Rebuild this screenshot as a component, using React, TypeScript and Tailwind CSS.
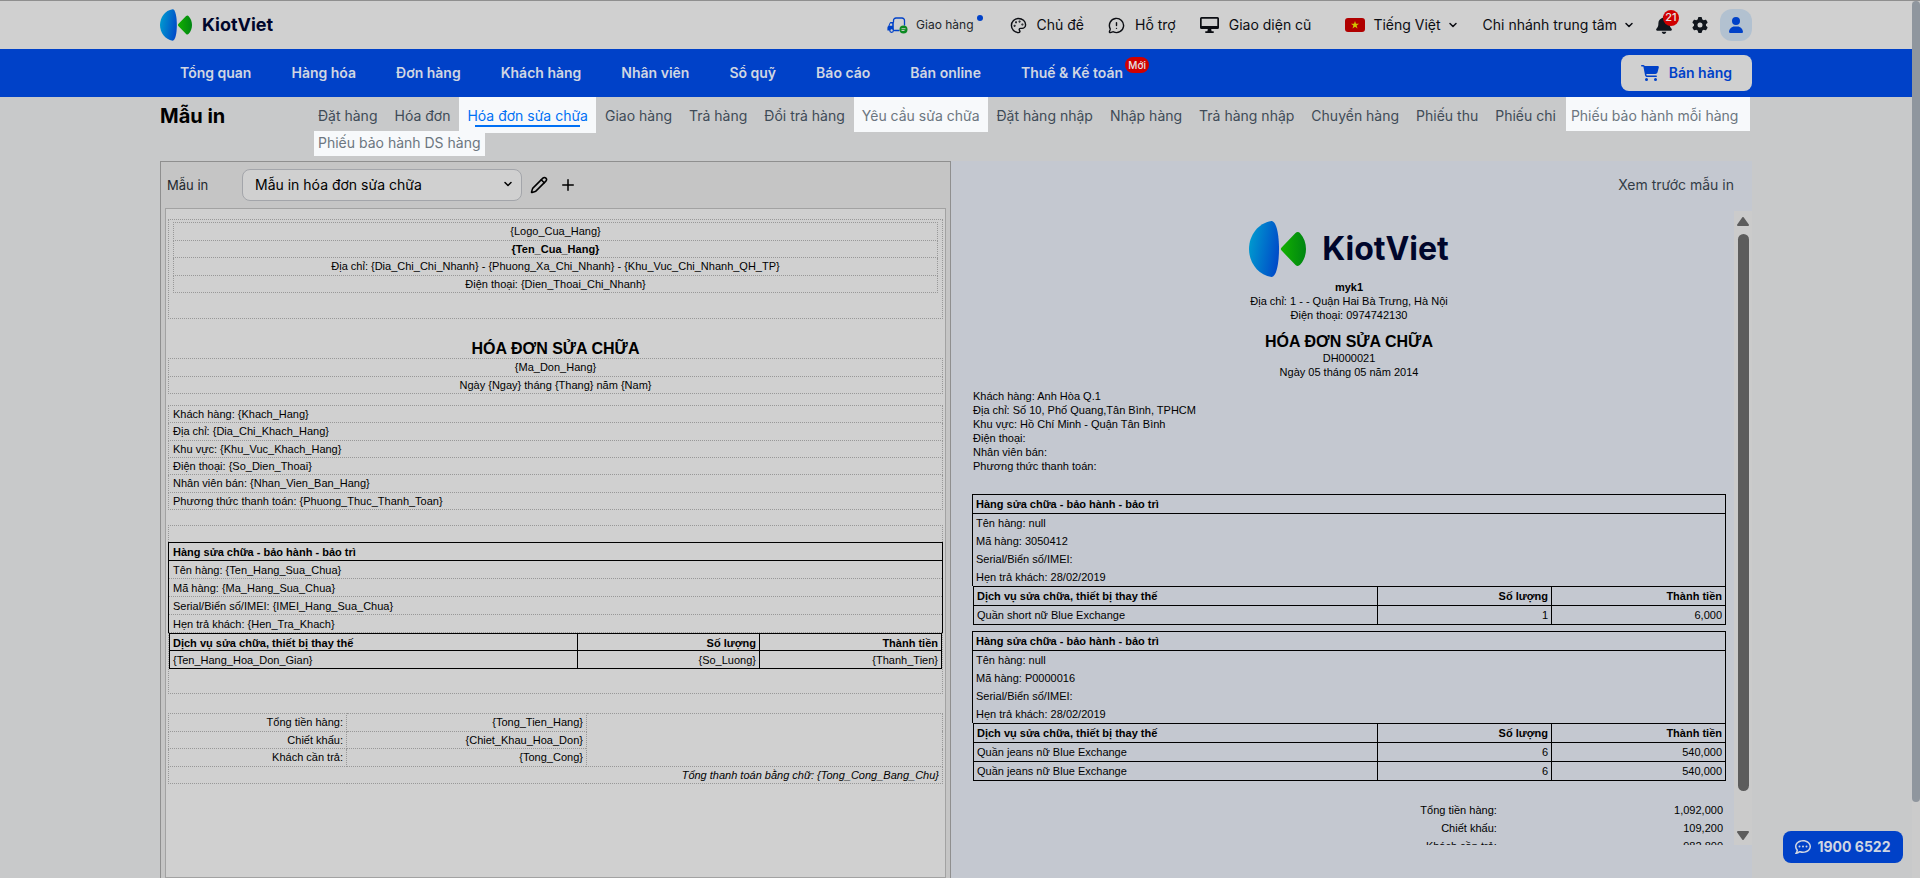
import type { ReactNode } from "react";
import { ChevronDown, MessageCircleWarning, Palette, Pencil, Plus } from "lucide-react";
import { FaBell, FaCartShopping, FaGear, FaRegCommentDots, FaUser } from "react-icons/fa6";

const mainMenu = ["Tổng quan", "Hàng hóa", "Đơn hàng", "Khách hàng", "Nhân viên", "Sổ quỹ", "Báo cáo", "Bán online"];

type Tab = { name: string; look?: "active" | "spot" | "spotWide" | "spotLast" };

const tabs: Tab[] = [
  { name: "Đặt hàng" },
  { name: "Hóa đơn" },
  { name: "Hóa đơn sửa chữa", look: "active" },
  { name: "Giao hàng" },
  { name: "Trả hàng" },
  { name: "Đổi trả hàng" },
  { name: "Yêu cầu sửa chữa", look: "spot" },
  { name: "Đặt hàng nhập" },
  { name: "Nhập hàng" },
  { name: "Trả hàng nhập" },
  { name: "Chuyển hàng" },
  { name: "Phiếu thu" },
  { name: "Phiếu chi" },
  { name: "Phiếu bảo hành mỗi hàng", look: "spotWide" },
  { name: "Phiếu bảo hành DS hàng", look: "spotLast" },
];

const tabLooks = {
  plain: "h-[34px] pt-[9px] px-2 text-[#3f4b57]",
  active: "h-[36px] pt-[9px] px-2 bg-[#f7f9fb] text-[#0070f4]",
  spot: "h-[35px] pt-[9px] px-2 bg-[#f7f9fb] text-[#6c7680]",
  spotWide: "h-[34px] pt-[9px] pl-[5px] pr-3 ml-px bg-[#f7f9fb] text-[#6c7680]",
  spotLast: "h-[25px] pt-[2px] px-1 bg-[#f7f9fb] text-[#6c7680] ml-1 -mt-[2px]",
};

const customerFields = [
  "Khách hàng: {Khach_Hang}",
  "Địa chỉ: {Dia_Chi_Khach_Hang}",
  "Khu vực: {Khu_Vuc_Khach_Hang}",
  "Điện thoại: {So_Dien_Thoai}",
  "Nhân viên bán: {Nhan_Vien_Ban_Hang}",
  "Phương thức thanh toán: {Phuong_Thuc_Thanh_Toan}",
];

const repairFields = [
  "Tên hàng: {Ten_Hang_Sua_Chua}",
  "Mã hàng: {Ma_Hang_Sua_Chua}",
  "Serial/Biển số/IMEI: {IMEI_Hang_Sua_Chua}",
  "Hẹn trả khách: {Hen_Tra_Khach}",
];

const customer = [
  "Khách hàng: Anh Hòa Q.1",
  "Địa chỉ: Số 10, Phố Quang,Tân Bình, TPHCM",
  "Khu vực: Hồ Chí Minh - Quận Tân Bình",
  "Điện thoại:",
  "Nhân viên bán:",
  "Phương thức thanh toán:",
];

const repairs = [
  { code: "3050412", lines: [["Quần short nữ Blue Exchange", "1", "6,000"]] },
  {
    code: "P0000016",
    lines: [
      ["Quần jeans nữ Blue Exchange", "6", "540,000"],
      ["Quần jeans nữ Blue Exchange", "6", "540,000"],
    ],
  },
];

const totals = [
  ["Tổng tiền hàng:", "1,092,000"],
  ["Chiết khấu:", "109,200"],
  ["Khách cần trả:", "982,800"],
];

function LogoMark({ id, className }: { id: string; className: string }) {
  return (
    <svg viewBox="0 0 57 56" className={className} aria-hidden="true">
      <defs>
        <linearGradient id={`${id}-blue`} x1="0" y1="0.4" x2="1" y2="0.7">
          <stop offset="0" stopColor="#0099cf" />
          <stop offset="1" stopColor="#0048c8" />
        </linearGradient>
        <linearGradient id={`${id}-green`} x1="0" y1="0" x2="1" y2="0">
          <stop offset="0" stopColor="#12b000" />
          <stop offset="1" stopColor="#008512" />
        </linearGradient>
      </defs>
      <path d="M22.500 0C9 2 0 14.500 0 28s9 26 22.500 28C27.500 56 30 42 30 28S27.500 0 22.500 0Z" fill={`url(#${id}-blue)`} />
      <path d="M32.600 29.600a2.300 2.300 0 0 1 0-3.200L46.500 12c1.300-1.300 3.400-1.300 4.600.2C55 16.500 57 22 57 28s-2 11.500-5.900 15.800c-1.200 1.500-3.300 1.500-4.600.2Z" fill={`url(#${id}-green)`} />
    </svg>
  );
}

function TruckIcon() {
  return (
    <svg viewBox="0 0 21 17" className="h-[17px] w-[21px]" fill="none" aria-hidden="true">
      <path d="M6.500 5V3.500A2.500 2.500 0 0 1 9 1h6a2.500 2.500 0 0 1 2.500 2.500V8M7.500 13.500H12" stroke="#0041c8" strokeWidth="1.300" strokeLinecap="round" />
      <path fillRule="evenodd" d="M6.800 5H4.200c-.8 0-1.400.5-1.700 1.200L1.300 9C.7 9.400.4 10 .4 10.700V13.500h6.400ZM3.300 6.500h1.900v2.200H2.500Z" fill="#0041c8" />
      <circle cx="4.600" cy="13.500" r="1.800" fill="#d0d0d0" stroke="#0041c8" strokeWidth="1.200" />
      <circle cx="16.500" cy="12.500" r="4" fill="#0b8a22" />
      <path d="M14.500 11.700h4M14.500 13.500h3" stroke="#d0d0d0" strokeWidth="0.900" />
    </svg>
  );
}

function DesktopIcon() {
  return (
    <svg viewBox="0 0 19 16" className="h-4 w-[19px]" fill="currentColor" aria-hidden="true">
      <path fillRule="evenodd" d="M1.500 0h16A1.500 1.500 0 0 1 19 1.500v9a1.500 1.500 0 0 1-1.500 1.500h-16A1.500 1.500 0 0 1 0 10.500v-9A1.500 1.500 0 0 1 1.500 0Zm.2 1.700V9h15.600V1.700Z" />
      <path d="M7.800 12h3.400l.4 2.300h2.100V16H5.300v-1.700h2.100Z" />
    </svg>
  );
}

function Flag() {
  return (
    <svg viewBox="0 0 20 14" className="h-[14px] w-5" aria-hidden="true">
      <rect width="20" height="14" rx="3" fill="#b00000" />
      <path d="m10 3 1 2.800h3l-2.400 1.700.9 2.900L10 8.700l-2.500 1.700.9-2.900L6 5.800h3Z" fill="#d0c400" />
    </svg>
  );
}

function HeaderLink({ icon, children, className = "" }: { icon: ReactNode; children: ReactNode; className?: string }) {
  return (
    <button type="button" className={`flex items-center ${className}`}>
      {icon}
      {children}
    </button>
  );
}

function TopBar() {
  return (
    <header className="flex h-[49px] items-center justify-between border-t border-[#8f8f8f] bg-[#d0d0d0] px-40 text-sm text-[#0b0d12]">
      <a href="#" className="flex items-center gap-[10px]">
        <LogoMark id="top" className="h-8 w-8" />
        <span className="text-lg font-bold text-[#00062b]">KiotViet</span>
      </a>
      <div className="flex items-center">
        <button type="button" className="relative mr-9 flex items-center gap-2 text-xs text-[#22262c]">
          <TruckIcon />
          Giao hàng
          <span className="absolute -top-[2px] -right-[9px] size-[6px] rounded-full bg-[#0041c8]" />
        </button>
        <HeaderLink className="mr-6 gap-[10px]" icon={<Palette size={17} strokeWidth={2} />}>Chủ đề</HeaderLink>
        <HeaderLink className="mr-6 gap-[10px]" icon={<MessageCircleWarning size={17} strokeWidth={2} />}>Hỗ trợ</HeaderLink>
        <HeaderLink className="mr-[34px] gap-[10px]" icon={<DesktopIcon />}>Giao diện cũ</HeaderLink>
        <HeaderLink className="mr-6 gap-2" icon={<Flag />}>
          <span className="flex items-center gap-[6px]">
            Tiếng Việt
            <ChevronDown size={12} strokeWidth={3} />
          </span>
        </HeaderLink>
        <button type="button" className="mr-5 flex items-center gap-[6px]">
          Chi nhánh trung tâm
          <ChevronDown size={12} strokeWidth={3} />
        </button>
        <button type="button" className="relative mr-[19px]" aria-label="Thông báo">
          <FaBell size={18} className="text-[#11161d]" />
          <span className="absolute -top-[6px] -right-[6px] flex size-4 items-center justify-center rounded-full bg-[#d00000] text-[11px] font-medium text-[#e6e6e6]">21</span>
        </button>
        <button type="button" className="mr-3" aria-label="Thiết lập">
          <FaGear size={16} className="text-[#11161d]" />
        </button>
        <button type="button" className="flex size-8 items-center justify-center rounded-xl bg-[#b2c1d0]" aria-label="Tài khoản">
          <FaUser size={16} className="text-[#0041c8]" />
        </button>
      </div>
    </header>
  );
}

function MainNav() {
  return (
    <nav className="flex h-12 items-center justify-between bg-[#0041c8] px-40 text-sm font-semibold text-[#d0d6e2]">
      <div className="flex items-center">
        {mainMenu.map((item) => (
          <a key={item} href="#" className="px-5">{item}</a>
        ))}
        <a href="#" className="relative px-5">
          Thuế &amp; Kế toán
          <span className="absolute -top-[6px] -right-[6px] flex h-4 w-6 items-center justify-center rounded-full bg-[#d00000] text-[10px] font-medium text-[#e6e6e6]">Mới</span>
        </a>
      </div>
      <button type="button" className="flex h-9 items-center gap-[10px] rounded-lg bg-[#d0d0d0] px-5 text-[#0041c8]">
        <FaCartShopping size={18} />
        Bán hàng
      </button>
    </nav>
  );
}

function TemplateTabs() {
  return (
    <div className="flex h-16 px-40">
      <h1 className="w-[150px] shrink-0 pt-[5px] text-xl leading-7 font-bold text-black">Mẫu in</h1>
      <div className="flex flex-1 flex-wrap content-start items-start gap-x-px text-sm">
        {tabs.map((tab) => (
          <a key={tab.name} href="#" className={`flex items-start ${tabLooks[tab.look ?? "plain"]}`}>
            {tab.look === "active" ? (
              <span className="relative">
                {tab.name}
                <span className="absolute inset-x-2 -bottom-[1px] h-[2px] bg-[#0070f4]" />
              </span>
            ) : (
              tab.name
            )}
          </a>
        ))}
      </div>
    </div>
  );
}

const dotted = "border border-dotted border-[#989898]";

function TemplateEditor() {
  return (
    <div className="mx-1 flex-1 overflow-hidden border border-[#a2a2a2] bg-[#d0d0d0] px-[2px] pt-[10px] font-['Liberation_Sans',Arial,sans-serif] text-[11px] leading-[14px] text-black">
      <div className={`h-[100px] px-1 pt-[2px] ${dotted}`}>
        <table className="h-[71px] w-full border-collapse text-center">
          <tbody>
            <tr><td className={dotted}>{"{Logo_Cua_Hang}"}</td></tr>
            <tr><td className={`font-bold ${dotted}`}>{"{Ten_Cua_Hang}"}</td></tr>
            <tr><td className={dotted}>{"Địa chỉ: {Dia_Chi_Chi_Nhanh} - {Phuong_Xa_Chi_Nhanh} - {Khu_Vuc_Chi_Nhanh_QH_TP}"}</td></tr>
            <tr><td className={dotted}>{"Điện thoại: {Dien_Thoai_Chi_Nhanh}"}</td></tr>
          </tbody>
        </table>
      </div>

      <h2 className="mt-5 text-center text-base leading-[19px] font-bold">HÓA ĐƠN SỬA CHỮA</h2>
      <table className="h-[36px] w-full border-collapse text-center">
        <tbody>
          <tr><td className={dotted}>{"{Ma_Don_Hang}"}</td></tr>
          <tr><td className={dotted}>{"Ngày {Ngay} tháng {Thang} năm {Nam}"}</td></tr>
        </tbody>
      </table>

      <table className="mt-[11px] h-[105px] w-full border-collapse">
        <tbody>
          {customerFields.map((field) => (
            <tr key={field}><td className={`px-1 ${dotted}`}>{field}</td></tr>
          ))}
        </tbody>
      </table>

      <table className="mt-[15px] w-full border-collapse">
        <tbody>
          <tr className="h-[17px]"><td className={dotted} /></tr>
          <tr className="h-[18px]"><th className="border border-black px-1 text-left">Hàng sửa chữa - bảo hành - bảo trì</th></tr>
          {repairFields.map((field) => (
            <tr key={field} className="h-[18px]">
              <td className="border border-y-[#989898] border-x-black [border-block-style:dotted] px-1">{field}</td>
            </tr>
          ))}
          <tr>
            <td className={`pb-6 ${dotted}`}>
              <table className="h-[36px] w-full table-fixed border-collapse">
                <thead>
                  <tr>
                    <th className="border border-black px-[3px] pt-[2px] text-left">Dịch vụ sửa chữa, thiết bị thay thế</th>
                    <th className="w-[182px] border border-black px-[3px] pt-[2px] text-right">Số lượng</th>
                    <th className="w-[182px] border border-black px-[3px] pt-[2px] text-right">Thành tiền</th>
                  </tr>
                </thead>
                <tbody>
                  <tr>
                    <td className="border border-black px-[3px]">{"{Ten_Hang_Hoa_Don_Gian}"}</td>
                    <td className="border border-black px-[3px] text-right">{"{So_Luong}"}</td>
                    <td className="border border-black px-[3px] text-right">{"{Thanh_Tien}"}</td>
                  </tr>
                </tbody>
              </table>
            </td>
          </tr>
        </tbody>
      </table>

      <table className="mt-[19px] h-[71px] w-full border-collapse text-right">
        <tbody>
          <tr>
            <td className={`w-[23%] px-[3px] ${dotted}`}>Tổng tiền hàng:</td>
            <td className={`w-[31%] px-[3px] ${dotted}`}>{"{Tong_Tien_Hang}"}</td>
            <td rowSpan={3} className={dotted} />
          </tr>
          <tr>
            <td className={`px-[3px] ${dotted}`}>Chiết khấu:</td>
            <td className={`px-[3px] ${dotted}`}>{"{Chiet_Khau_Hoa_Don}"}</td>
          </tr>
          <tr>
            <td className={`px-[3px] ${dotted}`}>Khách cần trả:</td>
            <td className={`px-[3px] ${dotted}`}>{"{Tong_Cong}"}</td>
          </tr>
          <tr><td colSpan={3} className={`px-[3px] italic ${dotted}`}>{"Tổng thanh toán bằng chữ: {Tong_Cong_Bang_Chu}"}</td></tr>
        </tbody>
      </table>
    </div>
  );
}

function RepairBlock({ code, lines }: { code: string; lines: string[][] }) {
  const fields = ["Tên hàng: null", `Mã hàng: ${code}`, "Serial/Biển số/IMEI:", "Hẹn trả khách: 28/02/2019"];
  return (
    <div className="mb-[6px]">
      <div className="border border-b-0 border-black">
        <div className="h-[19px] border-b border-black px-[3px] leading-[18px] font-bold">Hàng sửa chữa - bảo hành - bảo trì</div>
        {fields.map((field) => (
          <div key={field} className="h-[18px] px-[3px] leading-[18px]">{field}</div>
        ))}
      </div>
      <div className="pl-px">
        <table className="w-full table-fixed border-collapse">
          <thead>
            <tr className="h-[19px]">
              <th className="border border-black px-[3px] text-left">Dịch vụ sửa chữa, thiết bị thay thế</th>
              <th className="w-[174px] border border-black px-[3px] text-right">Số lượng</th>
              <th className="w-[174px] border border-black px-[3px] text-right">Thành tiền</th>
            </tr>
          </thead>
          <tbody>
            {lines.map(([name, quantity, amount], i) => (
              <tr key={i} className="h-[19px]">
                <td className="border border-black px-[3px]">{name}</td>
                <td className="border border-black px-[3px] text-right">{quantity}</td>
                <td className="border border-black px-[3px] text-right">{amount}</td>
              </tr>
            ))}
          </tbody>
        </table>
      </div>
    </div>
  );
}

function Preview() {
  return (
    <div className="flex min-w-0 flex-1 flex-col overflow-hidden pt-[10px] pl-[21px] font-['Liberation_Sans',Arial,sans-serif] text-[11px] leading-[14px] text-black">
      <div className="flex flex-col items-center">
        <div className="flex h-14 items-center gap-4">
          <LogoMark id="preview" className="h-14 w-[57px]" />
          <span className="font-['Inter',sans-serif] text-[32px] leading-10 font-bold text-[#00062b]">KiotViet</span>
        </div>
        <p className="mt-[3px] font-bold">myk1</p>
        <p>Địa chỉ: 1 - - Quận Hai Bà Trưng, Hà Nội</p>
        <p>Điện thoại: 0974742130</p>
        <h2 className="mt-[10px] text-base leading-[19px] font-bold">HÓA ĐƠN SỬA CHỮA</h2>
        <p>DH000021</p>
        <p>Ngày 05 tháng 05 năm 2014</p>
      </div>
      <div className="mt-[10px] mb-[21px] pl-px">
        {customer.map((line) => (
          <p key={line}>{line}</p>
        ))}
      </div>
      {repairs.map((repair) => (
        <RepairBlock key={repair.code} {...repair} />
      ))}
      <table className="mt-[14px] w-full shrink-0">
        <tbody>
          {totals.map(([label, amount]) => (
            <tr key={label} className="h-[18px] text-right">
              <td className="pr-[3px]">{label}</td>
              <td className="w-[30%] pr-[3px]">{amount}</td>
            </tr>
          ))}
        </tbody>
      </table>
    </div>
  );
}

export default function App() {
  return (
    <div className="relative flex h-screen flex-col overflow-hidden bg-[#c8c9ca] pr-2 font-['Inter',sans-serif]">
      <TopBar />
      <MainNav />
      <TemplateTabs />

      <main className="grid min-h-0 flex-1 grid-cols-[791fr_801fr] px-40">
        <section className="flex min-h-0 min-w-0 flex-col border border-b-0 border-[#8f8f8f] bg-[#c5c5c5]">
          <div className="flex h-[46px] items-center pl-[6px]">
            <label htmlFor="template" className="w-[75px] pt-[2px] text-[13px] text-[#23282e]">Mẫu in</label>
            <div className="relative">
              <select id="template" className="h-8 w-[280px] appearance-none rounded-lg border border-[#a3a5aa] bg-[#d0d0d0] px-3 text-sm text-black">
                <option>Mẫu in hóa đơn sửa chữa</option>
              </select>
              <ChevronDown size={12} strokeWidth={3} className="pointer-events-none absolute top-[9px] right-2" />
            </div>
            <button type="button" className="ml-2" aria-label="Sửa"><Pencil size={18} strokeWidth={2} /></button>
            <button type="button" className="ml-[11px]" aria-label="Thêm"><Plus size={18} strokeWidth={2} /></button>
          </div>
          <TemplateEditor />
        </section>

        <section className="flex min-h-0 min-w-0 flex-col bg-[#c4c8d0] pb-[33px]">
          <h2 className="h-[50px] pt-[14px] pr-[18px] text-right text-sm leading-5 text-[#333c46]">Xem trước mẫu in</h2>
          <div className="flex min-h-0 flex-1">
            <Preview />
            <div className="ml-2 flex w-[18px] flex-col items-center bg-[#cbcbcb] pt-[6px] pb-[5px]">
              <svg viewBox="0 0 12 9" className="h-[9px] w-3" aria-hidden="true">
                <path d="M6 1 11 8H1Z" fill="#5c5c5c" stroke="#5c5c5c" strokeWidth="2" strokeLinejoin="round" />
              </svg>
              <div className="mt-2 mb-10 w-[11px] flex-1 rounded-full bg-[#5c5c5c]" />
              <svg viewBox="0 0 12 9" className="h-[9px] w-3" aria-hidden="true">
                <path d="M6 8 1 1h10Z" fill="#5c5c5c" stroke="#5c5c5c" strokeWidth="2" strokeLinejoin="round" />
              </svg>
            </div>
          </div>
        </section>
      </main>

      <div className="absolute inset-y-0 right-0 w-2 border-t border-[#8f8f8f] bg-[#cbcbcb] pb-[76px]">
        <div className="h-full rounded-full bg-[#8f969e]" />
      </div>

      <a href="tel:19006522" className="fixed right-[17px] bottom-[15px] flex h-8 w-[120px] items-center justify-center gap-[6px] rounded-lg bg-[#0041c8] text-sm font-bold text-[#d0d6e2]">
        <FaRegCommentDots size={16} />
        1900 6522
      </a>
    </div>
  );
}
